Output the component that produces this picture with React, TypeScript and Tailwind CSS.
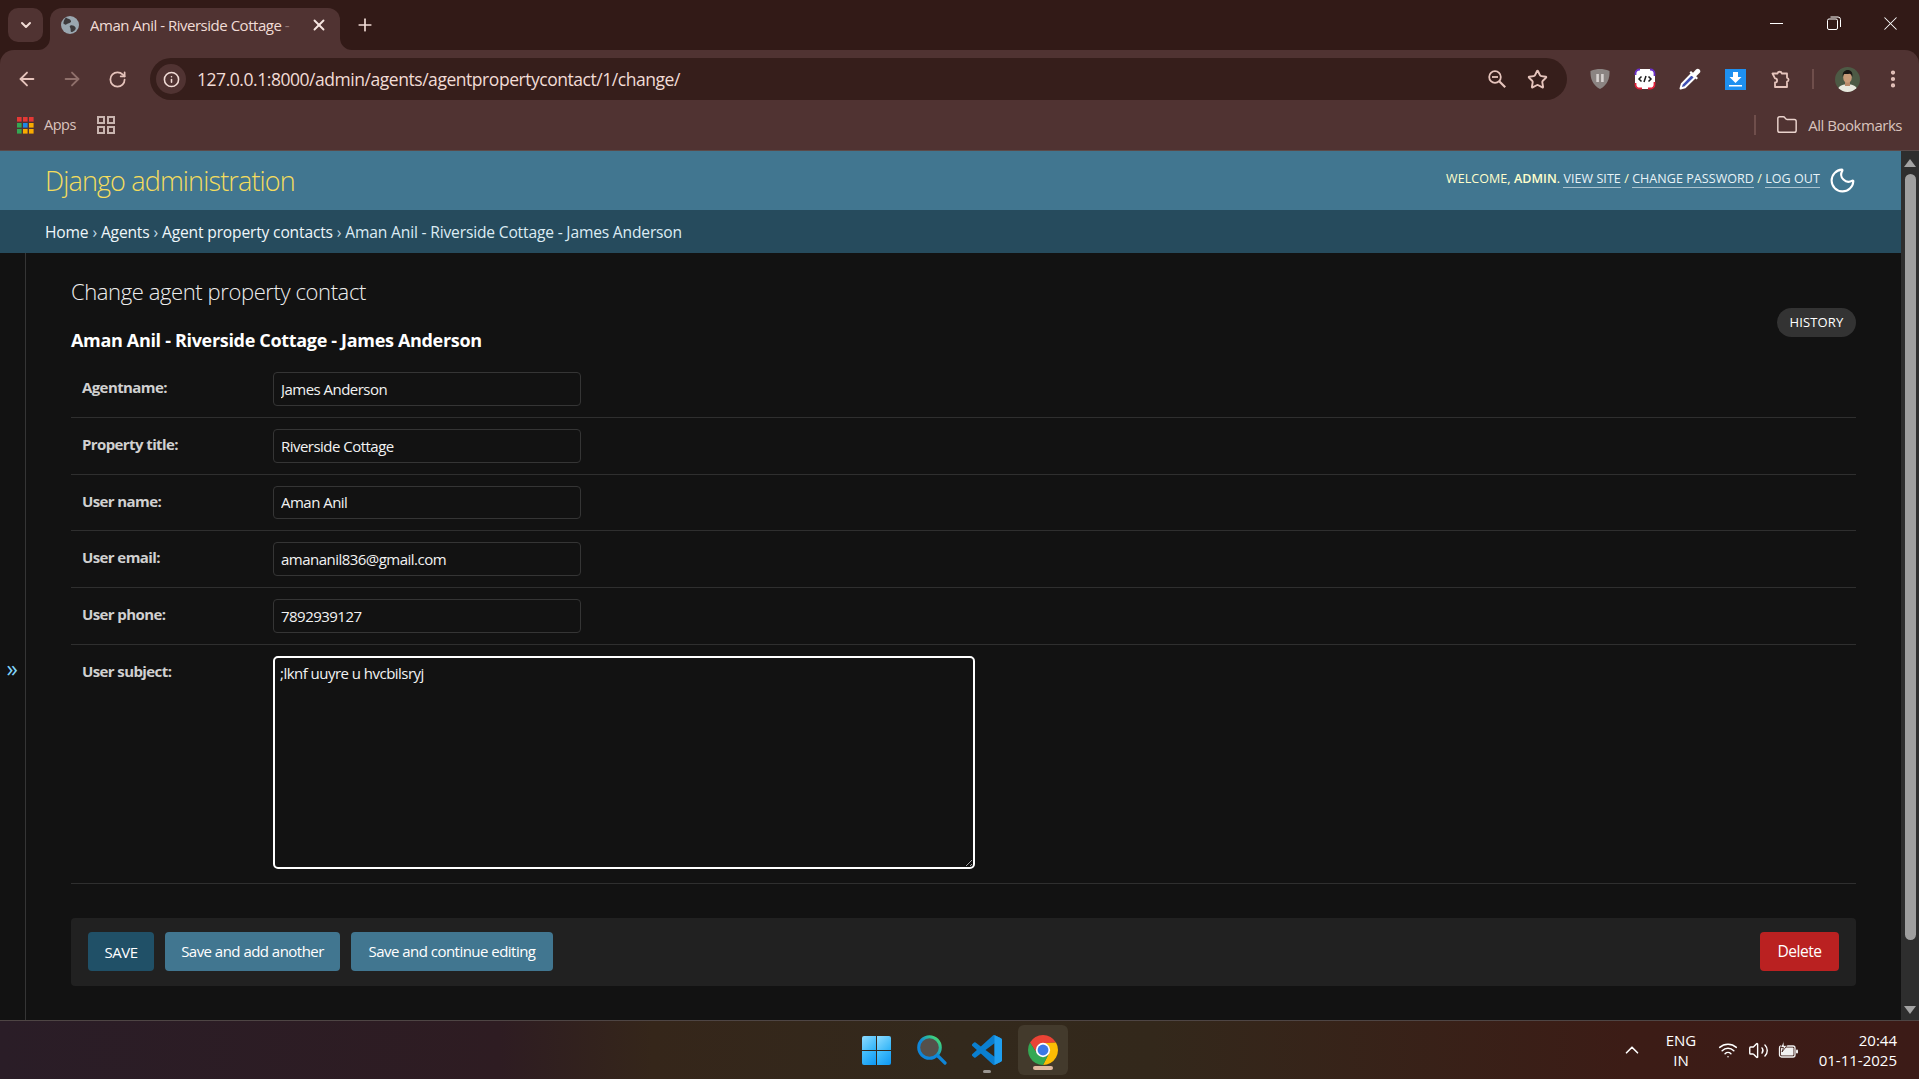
import React from 'react';
import {
  ArrowLeft,
  ArrowRight,
  ChevronDown,
  ChevronUp,
  EllipsisVertical,
  Folder,
  Info,
  Moon,
  Plus,
  RotateCw,
  Star,
  Volume2,
  Wifi,
  X,
} from 'lucide-react';

const fields = [
  { label: 'Agentname:', value: 'James Anderson' },
  { label: 'Property title:', value: 'Riverside Cottage' },
  { label: 'User name:', value: 'Aman Anil' },
  { label: 'User email:', value: 'amananil836@gmail.com' },
  { label: 'User phone:', value: '7892939127' },
];

const AppsIcon = () => (
  <svg width="17" height="17" viewBox="0 0 17 17">
    {[
      ['#e53935', '#e53935', '#e53935'],
      ['#34a853', '#1e88e5', '#f9ab00'],
      ['#34a853', '#f9ab00', '#f9ab00'],
    ].map((row, r) =>
      row.map((c, i) => <rect key={`${r}-${i}`} x={i * 6} y={r * 6} width="4.6" height="4.6" fill={c} />)
    )}
  </svg>
);

const GridIcon = () => (
  <svg width="18" height="18" viewBox="0 0 18 18" fill="none" stroke="#c9b5b0" strokeWidth="2">
    <rect x="1" y="1" width="6" height="6" />
    <rect x="11" y="1" width="6" height="6" />
    <rect x="1" y="11" width="6" height="6" />
    <rect x="11" y="11" width="6" height="6" />
  </svg>
);

const ZoomOutIcon = () => (
  <svg width="18" height="18" viewBox="0 0 18 18" fill="none" stroke="#e6c4bc" strokeWidth="1.800" className="ml-auto">
    <circle cx="7" cy="7" r="5.800" />
    <path d="M4 7h6" />
    <path d="m11.200 11.200 6 6" strokeWidth="2.200" />
  </svg>
);

const ShieldIcon = () => (
  <svg width="20" height="22" viewBox="0 0 20 22">
    <path d="M10 1c3 0 6 .6 9.500 2 .3 7.500-2 14-9.500 18C2.500 17 .2 10.500.5 3 4 1.600 7 1 10 1Z" fill="#8b8482" />
    <rect x="6.300" y="6" width="2.600" height="8" fill="#d8d2d0" />
    <rect x="11.100" y="6" width="2.600" height="8" fill="#d8d2d0" />
  </svg>
);

const DevIcon = () => (
  <svg width="22" height="22" viewBox="0 0 22 22">
    <rect x="1" y="1" width="20" height="20" rx="5" fill="#fff" />
    <path d="M6 1.500h-.5A4 4 0 0 0 1.500 5.500V7M16 1.500h.5a4 4 0 0 1 4 4V8" fill="none" stroke="#6a2fc9" strokeWidth="1.800" />
    <path d="M1.500 15v1.500a4 4 0 0 0 4 4H8M14 20.500h2.500a4 4 0 0 0 4-4V14" fill="none" stroke="#e0203a" strokeWidth="1.800" />
    <path d="M7.500 8.500 5 11l2.500 2.500M14.500 8.500 17 11l-2.500 2.500M12 8l-2 6" fill="none" stroke="#1c1c1c" strokeWidth="1.500" />
  </svg>
);

const DropperIcon = () => (
  <svg width="22" height="22" viewBox="0 0 22 22">
    <path d="M12.500 6 2.800 16 1.500 20.500l4.500-1.300L16 9.500Z" fill="#3f51b5" stroke="#fff" strokeWidth="2" strokeLinejoin="round" />
    <path d="m10.500 4.500 7 7 1.500-1.500-1.800-1.800 3.300-3.200a2.400 2.400 0 0 0-3.500-3.500L14 4.800 12 3Z" fill="#fff" />
  </svg>
);

const DownloadIcon = () => (
  <svg width="21" height="21" viewBox="0 0 21 21">
    <rect width="21" height="21" fill="#1e90f0" />
    <path d="M8 3h5v5h3.500l-6 6-6-6H8Z" fill="#fff" />
    <rect x="4" y="16" width="13" height="1.500" fill="#fff" />
  </svg>
);

const PuzzleIcon = () => (
  <svg width="22" height="22" viewBox="0 0 22 22" fill="none" stroke="#e6c4bc" strokeWidth="1.800" strokeLinejoin="round">
    <path d="M2.500 5.500h5a2.200 2.200 0 0 1 4.300 0h5.200v4.300a2 2 0 0 1 0 3.900v5.300H5v-4.500a2 2 0 0 0 0-4.200l-2.500-4.800Z" />
  </svg>
);

const Avatar = () => (
  <svg width="25" height="25" viewBox="0 0 25 25">
    <clipPath id="avatar-clip">
      <circle cx="12.500" cy="12.500" r="12.500" />
    </clipPath>
    <g clipPath="url(#avatar-clip)">
      <rect width="25" height="25" fill="#4d5a45" />
      <path d="M2 25c.5-5 4-7 7.500-7.500h6c3.500.5 7 2.500 7.500 7.500Z" fill="#e8e8de" />
      <rect x="10" y="14" width="5" height="5" fill="#b98a6a" />
      <ellipse cx="12.500" cy="10.500" rx="4.300" ry="5.300" fill="#c89a78" />
      <path d="M7.800 10c-.7-5 2-7 5-7s5.300 2 4.500 7c-.5-2-1.500-3-3-3.200-2 .4-4.500 0-5.300.2-.6.800-1 1.800-1.200 3Z" fill="#1b1714" />
    </g>
  </svg>
);

const RestoreIcon = () => (
  <svg width="14" height="14" viewBox="0 0 14 14" fill="none" stroke="#fff" strokeWidth="1">
    <rect x="0.500" y="3" width="10" height="10.500" rx="1.500" />
    <path d="M3.500 1h7.500a2.500 2.500 0 0 1 2.500 2.500V11" />
  </svg>
);

const WindowsLogo = () => (
  <svg width="29" height="29" viewBox="0 0 29 29">
    <defs>
      <linearGradient id="win-a" x1="0" y1="0" x2="1" y2="1">
        <stop offset="0" stopColor="#8fdcff" />
        <stop offset="1" stopColor="#2cb2f8" />
      </linearGradient>
      <linearGradient id="win-b" x1="0" y1="0" x2="1" y2="1">
        <stop offset="0" stopColor="#4cc4fc" />
        <stop offset="1" stopColor="#0d97f3" />
      </linearGradient>
    </defs>
    <path d="M2 0h12v14H0V2a2 2 0 0 1 2-2Z" fill="url(#win-a)" />
    <path d="M15 0h12a2 2 0 0 1 2 2v12H15Z" fill="url(#win-a)" />
    <path d="M0 15h14v14H2a2 2 0 0 1-2-2Z" fill="url(#win-b)" />
    <path d="M15 15h14v12a2 2 0 0 1-2 2H15Z" fill="url(#win-b)" />
  </svg>
);

const SearchLogo = () => (
  <svg width="30" height="30" viewBox="0 0 30 30" fill="none">
    <defs>
      <linearGradient id="search-ring" x1="0" y1="1" x2="1" y2="0">
        <stop offset="0.450" stopColor="#0f86d8" />
        <stop offset="0.800" stopColor="#35c98a" />
        <stop offset="1" stopColor="#57d860" />
      </linearGradient>
    </defs>
    <circle cx="12.500" cy="12.500" r="10.800" fill="#55504a" stroke="url(#search-ring)" strokeWidth="3" />
    <path d="m21 21 7 7" stroke="#0f86d8" strokeWidth="3.200" strokeLinecap="round" />
  </svg>
);

const VsCodeLogo = () => (
  <svg width="30" height="30" viewBox="0 0 100 100">
    <path
      fillRule="evenodd"
      d="M70.900 99.300a6.200 6.200 0 0 0 5-.2l20.600-9.900a6.200 6.200 0 0 0 3.500-5.600V16.400a6.200 6.200 0 0 0-3.500-5.600L75.900.9a6.200 6.200 0 0 0-7.100 1.200L29.400 38 12.200 25a4.200 4.200 0 0 0-5.300.2L1.400 30.300a4.200 4.200 0 0 0 0 6.200L16.300 50 1.400 63.600a4.200 4.200 0 0 0 0 6.200l5.500 5a4.200 4.200 0 0 0 5.300.2l17.200-13 39.400 35.900a6.200 6.200 0 0 0 2.600 1.400ZM75 27.300 45.100 50 75 72.700V27.300Z"
      fill="#0a7fd0"
    />
    <path d="M75 .4a6.200 6.200 0 0 1 .9.500l20.600 9.900a6.200 6.200 0 0 1 3.500 5.600v67.200a6.200 6.200 0 0 1-3.500 5.600l-20.600 9.900a6.200 6.200 0 0 1-.9.400V.4Z" fill="#1f9ff0" />
  </svg>
);

const ChromeLogo = () => (
  <svg width="30" height="30" viewBox="2 2 44 44">
    <path d="M43.050 13A22 22 0 0 0 4.950 13L15.340 29A10 10 0 0 1 24 14Z" fill="#ea4335" />
    <path d="M24 46A22 22 0 0 0 43.050 13L24 14A10 10 0 0 1 32.660 29Z" fill="#fbbc04" />
    <path d="M4.950 13A22 22 0 0 0 24 46L32.660 29A10 10 0 0 1 15.340 29Z" fill="#34a853" />
    <circle cx="24" cy="24" r="10.500" fill="#fff" />
    <circle cx="24" cy="24" r="8" fill="#3b78e7" />
  </svg>
);

const BatteryIcon = () => (
  <svg width="21" height="18" viewBox="0 0 21 18">
    <rect x="1.500" y="5" width="15.500" height="11" rx="2" fill="none" stroke="#f1f1f1" strokeWidth="1.300" />
    <rect x="3" y="6.500" width="12.500" height="8" rx="0.800" fill="#f1f1f1" />
    <rect x="18" y="8.500" width="2" height="4" rx="1" fill="#f1f1f1" />
    <path d="M6 0 2.500 6.500h3L4 11l5-6.500H6Z" fill="#f1f1f1" stroke="#3b1c17" strokeWidth="0.800" />
  </svg>
);

const ScrollArrow = ({ down }: { down?: boolean }) => (
  <svg width="14" height="10" viewBox="0 0 14 10" fill="#a3a3a3">
    <path d={down ? 'M1 1h12L7 9Z' : 'M1 9h12L7 1Z'} />
  </svg>
);

export default function App() {
  return (
    <div className="w-[1919px] h-[1079px] flex flex-col overflow-hidden bg-[#121212] font-['Open_Sans',sans-serif] tracking-[-0.03em]">
      {/* tab strip */}
      <div className="h-[50px] shrink-0 flex bg-[#321a17] text-[#f1dcd6]">
        <div className="ml-[8px] mt-[8px] w-[35px] h-[34px] rounded-[10px] bg-[#503332] flex items-center justify-center">
          <ChevronDown size={16} strokeWidth={3} color="#f1dcd6" />
        </div>
        <div className="relative ml-[7px] mt-[8px] w-[290px] h-[42px] rounded-t-[12px] bg-[#503332] flex items-center pl-[11px] pb-[8px]">
          <svg className="absolute left-[-12px] bottom-0" width="12" height="12" viewBox="0 0 12 12">
            <path d="M12 0v12H0A12 12 0 0 0 12 0Z" fill="#503332" />
          </svg>
          <svg className="absolute right-[-12px] bottom-0" width="12" height="12" viewBox="0 0 12 12">
            <path d="M0 0v12h12A12 12 0 0 1 0 0Z" fill="#503332" />
          </svg>
          <svg width="18" height="18" viewBox="0 0 18 18">
            <circle cx="9" cy="9" r="9" fill="#9aa7b0" />
            <path d="M5 1.500C7 3 9.500 3 10 5S7 7 6 8 3 9 2.500 7.500 3.500 3 5 1.500ZM9.500 9.500c2-.5 4 .5 5 2s-1.500 4-3.500 4.500-1-2-1.500-3.500-1.500-2.500 0-3Z" fill="#3d3a3c" />
          </svg>
          <span className="ml-[11px] w-[218px] overflow-hidden whitespace-nowrap text-[15px] text-[#f1dcd6]">
            Aman Anil - Riverside Cottage <span className="opacity-40">-</span>
          </span>
          <X size={18} strokeWidth={2.5} color="#f6e6e1" className="ml-[2px]" />
        </div>
        <div className="ml-[8px] mt-[8px] w-[34px] h-[34px] flex items-center justify-center">
          <Plus size={20} strokeWidth={2} color="#f1dcd6" />
        </div>
        <div className="ml-auto flex h-[46px]">
          <div className="w-[57px] flex items-center justify-center">
            <div className="w-[13px] h-px bg-white" />
          </div>
          <div className="w-[57px] flex items-center justify-center">
            <RestoreIcon />
          </div>
          <div className="w-[57px] flex items-center justify-center">
            <X size={23} strokeWidth={1.1} color="#fff" />
          </div>
        </div>
      </div>

      {/* chrome toolbar + bookmarks */}
      <div className="h-[100px] shrink-0 bg-[#321a17]">
        <div className="h-full rounded-t-[14px] bg-[#503332]">
          <div className="h-[50px] flex items-center pt-[8px] pl-[9px]">
            <div className="w-[36px] flex justify-center">
              <ArrowLeft size={22} color="#e6c4bc" />
            </div>
            <div className="ml-[9px] w-[36px] flex justify-center">
              <ArrowRight size={22} color="#8f706b" />
            </div>
            <div className="ml-[9px] w-[36px] flex justify-center">
              <RotateCw size={19} strokeWidth={2.2} color="#e6c4bc" />
            </div>
            <div className="ml-[15px] w-[1417px] h-[42px] rounded-full bg-[#361e1b] flex items-center pl-[6px] pr-[19px]">
              <div className="w-[30px] h-[30px] rounded-full bg-[#503332] flex items-center justify-center">
                <Info size={17} strokeWidth={2.2} color="#f1dcd6" />
              </div>
              <span className="ml-[11px] text-[17.500px] text-[#f1dcd6] tracking-[-0.026em]">
                127.0.0.1:8000/admin/agents/agentpropertycontact/1/change/
              </span>
              <ZoomOutIcon />
              <Star size={21} strokeWidth={2.2} color="#e6c4bc" className="ml-[21px]" />
            </div>
            <div className="ml-[15px] w-[36px] flex justify-center">
              <ShieldIcon />
            </div>
            <div className="ml-[9px] w-[36px] flex justify-center">
              <DevIcon />
            </div>
            <div className="ml-[9px] w-[36px] flex justify-center">
              <DropperIcon />
            </div>
            <div className="ml-[9px] w-[36px] flex justify-center">
              <DownloadIcon />
            </div>
            <div className="ml-[10px] w-[36px] flex justify-center">
              <PuzzleIcon />
            </div>
            <div className="ml-[13px] w-[2px] h-[20px] bg-[#6f4e4b]" />
            <div className="ml-[21px]">
              <Avatar />
            </div>
            <EllipsisVertical size={22} strokeWidth={2.6} color="#e6c4bc" className="ml-[22px]" />
          </div>
          <div className="h-[50px] flex items-center pl-[17px] pr-[17px]">
            <AppsIcon />
            <span className="ml-[10px] text-[14.500px] text-[#d9c3bd]">Apps</span>
            <div className="ml-[21px]">
              <GridIcon />
            </div>
            <div className="ml-auto w-[2px] h-[20px] bg-[#6f4e4b]" />
            <Folder size={22} strokeWidth={1.6} color="#ead3cd" className="ml-[20px]" />
            <span className="ml-[10px] text-[15px] text-[#d9c3bd]">All Bookmarks</span>
          </div>
        </div>
      </div>

      {/* page */}
      <div className="flex-1 flex min-h-0 border-t border-[#5b4a49]">
        <div className="flex-1 flex flex-col min-w-0">
          <div className="h-[59px] shrink-0 bg-[#417690] flex items-center justify-between pl-[45px] pr-[44px]">
            <div className="text-[27px] font-light leading-none text-[#f5dd5d] tracking-[-0.032em]">Django administration</div>
            <div className="flex items-center">
              <div className="pb-[2px] text-[12.500px] uppercase tracking-[0.005em] text-[#ffffcc]">
                Welcome, <strong className="font-semibold">admin</strong>.{' '}
                <a className="border-b border-[#a9c2ce] text-[#e8f3f7]">View site</a> /{' '}
                <a className="border-b border-[#a9c2ce] text-[#e8f3f7]">Change password</a> /{' '}
                <a className="border-b border-[#a9c2ce] text-[#e8f3f7]">Log out</a>
              </div>
              <Moon size={29} strokeWidth={1.7} color="#fff" className="ml-[8px]" />
            </div>
          </div>
          <div className="h-[43px] shrink-0 bg-[#264b5d] flex items-center pl-[45px] pt-[2px] text-[15.600px] tracking-[-0.011em] text-[#c4dce8]">
            <a className="text-[#eef6fa]">Home</a>
            <span className="mx-[4px]">›</span>
            <a className="text-[#eef6fa]">Agents</a>
            <span className="mx-[4px]">›</span>
            <a className="text-[#eef6fa]">Agent property contacts</a>
            <span className="mx-[4px]">›</span>
            <span className="text-[#dcecf4]">Aman Anil - Riverside Cottage - James Anderson</span>
          </div>
          <div className="flex-1 flex min-h-0">
            <div className="w-[26px] shrink-0 border-r border-[#353535] flex items-center justify-center pt-[64px] pr-[1px]">
              <span className="text-[23px] leading-none text-[#81d4fa]">»</span>
            </div>
            <div className="flex-1 pt-[23px] pl-[45px] pr-[45px] text-[#eeeeee]">
              <h1 className="h-[30px] text-[22px] leading-[30px] font-light tracking-[-0.018em]">Change agent property contact</h1>
              <div className="h-[55px] flex justify-between items-start">
                <h2 className="mt-[22px] text-[18px] leading-[24px] font-bold text-white tracking-[-0.018em]">
                  Aman Anil - Riverside Cottage - James Anderson
                </h2>
                <a className="mt-[2px] w-[79px] h-[29px] rounded-full bg-[#333333] flex items-center justify-center text-[13px] uppercase tracking-[0.01em] text-white">
                  History
                </a>
              </div>
              {fields.map((f) => (
                <div key={f.label} className="h-[56.750px] border-b border-[#2f2f2f] flex pl-[11px]">
                  <label className="w-[191px] shrink-0 mt-[16px] h-[20px] text-[15px] leading-[20px] font-bold text-[#d0d0d0] tracking-[-0.04em]">
                    {f.label}
                  </label>
                  <input
                    defaultValue={f.value}
                    className="mt-[11px] w-[308px] h-[33.750px] rounded-[4px] border border-[#353535] bg-[#121212] pl-[7px] text-[15px] tracking-[-0.035em] text-[#f2f2f2] outline-none"
                  />
                </div>
              ))}
              <div className="h-[239px] border-b border-[#2f2f2f] flex pl-[11px]">
                <label className="w-[191px] shrink-0 mt-[16px] h-[20px] text-[15px] leading-[20px] font-bold text-[#d0d0d0] tracking-[-0.04em]">
                  User subject:
                </label>
                <textarea
                  defaultValue=";lknf uuyre u hvcbilsryj"
                  className="mt-[11px] w-[702px] h-[213px] rounded-[5px] border-2 border-white bg-[#121212] pl-[5px] pt-[5px] text-[15px] leading-[20px] tracking-[-0.035em] text-[#f2f2f2] outline-none"
                />
              </div>
              <div className="mt-[34px] h-[68px] rounded-[4px] bg-[#212121] flex items-center px-[17px] gap-[11px] text-[15.600px] text-white">
                <button className="w-[66px] h-[39px] rounded-[4px] bg-[#205067] uppercase text-[15px]">Save</button>
                <button className="w-[175px] h-[39px] rounded-[4px] bg-[#417690] pb-[2px] text-[15px] tracking-[-0.035em]">Save and add another</button>
                <button className="w-[202px] h-[39px] rounded-[4px] bg-[#417690] pb-[2px] text-[15px] tracking-[-0.035em]">Save and continue editing</button>
                <button className="ml-auto w-[79px] h-[39px] rounded-[4px] bg-[#ba2121]">Delete</button>
              </div>
            </div>
          </div>
        </div>
        <div className="w-[18px] shrink-0 bg-[#2e2e2e] flex flex-col items-center">
          <div className="h-[23px] flex items-center justify-center">
            <ScrollArrow />
          </div>
          <div className="w-[11px] h-[766px] rounded-full bg-[#9f9f9f]" />
          <div className="mt-auto h-[20px] flex items-center justify-center">
            <ScrollArrow down />
          </div>
        </div>
      </div>

      {/* taskbar */}
      <div className="h-[59px] shrink-0 border-t border-[#4e4544] flex items-center text-white bg-[linear-gradient(90deg,#2a1d27_0%,#2e1c22_26%,#35261a_34%,#33291c_50%,#33281b_60%,#3c1c16_85%,#3c1b17_100%)]">
        <div className="ml-[862px]">
          <WindowsLogo />
        </div>
        <div className="ml-[26px]">
          <SearchLogo />
        </div>
        <div className="relative ml-[25px]">
          <VsCodeLogo />
          <div className="absolute left-[11px] top-[35px] w-[8px] h-[3px] rounded-full bg-[#9b9791]" />
        </div>
        <div className="relative ml-[16px] w-[50px] h-[50px] rounded-[6px] bg-[#433a2c] flex items-center justify-center">
          <ChromeLogo />
          <div className="absolute left-[15px] bottom-[5px] w-[20px] h-[4px] rounded-full bg-[#e0b9a0]" />
        </div>
        <ChevronUp size={22} strokeWidth={1.8} className="ml-[553px]" />
        <div className="ml-[18px] w-[40px] text-center text-[15px] leading-[20px] tracking-normal">
          <div>ENG</div>
          <div>IN</div>
        </div>
        <Wifi size={20} strokeWidth={1.8} className="ml-[17px]" />
        <Volume2 size={21} strokeWidth={1.6} className="ml-[10px]" />
        <div className="ml-[9px]">
          <BatteryIcon />
        </div>
        <div className="ml-[10px] w-[88px] text-right text-[15px] leading-[20px] tracking-normal">
          <div>20:44</div>
          <div>01-11-2025</div>
        </div>
      </div>
    </div>
  );
}
